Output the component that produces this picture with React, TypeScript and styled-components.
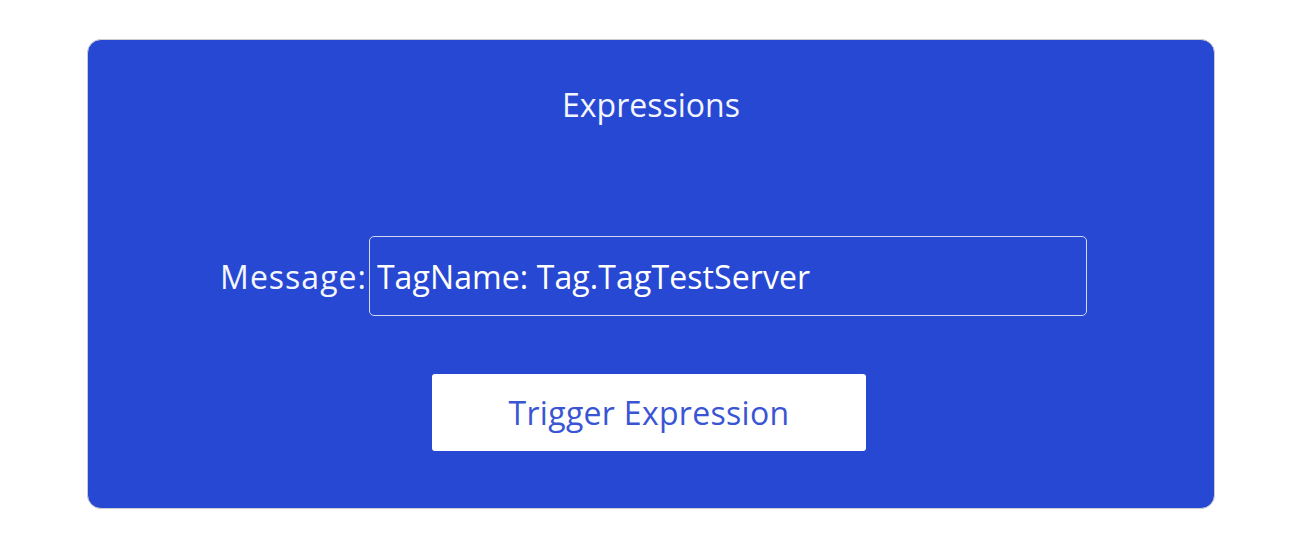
import React from "react";
import styled, { createGlobalStyle } from "styled-components";

const GlobalStyle = createGlobalStyle`
  html, body {
    margin: 0;
    padding: 0;
    background: #ffffff;
  }
  body {
    font-family: "Open Sans", "Noto Sans", sans-serif;
  }
`;

const Page = styled.div`
  width: 1302px;
  height: 548px;
  box-sizing: border-box;
  padding: 39px 87px;
  display: flex;
`;

const Card = styled.section`
  flex: 1;
  box-sizing: border-box;
  background: #2748d2;
  border: 1px solid #cccccc;
  border-radius: 14px;
  padding: 44px 0 0;
  display: flex;
  flex-direction: column;
  align-items: center;
  color: #ffffff;
`;

const Title = styled.h2`
  margin: 0;
  font-family: "Open Sans", "Noto Sans", sans-serif;
  font-weight: 400;
  font-size: 32px;
  line-height: 42px;
  color: #f4f6ff;
`;

const Row = styled.div`
  margin-top: 110px;
  display: flex;
  align-items: center;
  justify-content: center;
  gap: 2px;
  padding-left: 5px;
`;

const Label = styled.label`
  font-family: "Open Sans", "Noto Sans", sans-serif;
  font-size: 32px;
  letter-spacing: 1px;
  color: #f4f6ff;
`;

const TextInput = styled.input`
  box-sizing: border-box;
  width: 718px;
  height: 80px;
  padding: 0 0 0 7px;
  margin: 0;
  background: transparent;
  border: 1px solid #d0d7f7;
  border-radius: 5px;
  outline: none;
  font-family: "Open Sans", "Noto Sans", sans-serif;
  font-size: 32px;
  letter-spacing: 0.1px;
  color: #ffffff;
`;

const Button = styled.button`
  margin: 58px 4px 0 0;
  box-sizing: border-box;
  width: 434px;
  height: 77px;
  background: #ffffff;
  border: none;
  border-radius: 3px;
  font-family: "Open Sans", "Noto Sans", sans-serif;
  font-size: 32px;
  letter-spacing: 0.3px;
  color: #3a55d4;
  cursor: pointer;
`;

export default function App() {
  return (
    <>
      <GlobalStyle />
      <Page>
        <Card>
          <Title>Expressions</Title>
          <Row>
            <Label htmlFor="msg">Message:</Label>
            <TextInput id="msg" readOnly value="TagName: Tag.TagTestServer" />
          </Row>
          <Button type="button">Trigger Expression</Button>
        </Card>
      </Page>
    </>
  );
}
